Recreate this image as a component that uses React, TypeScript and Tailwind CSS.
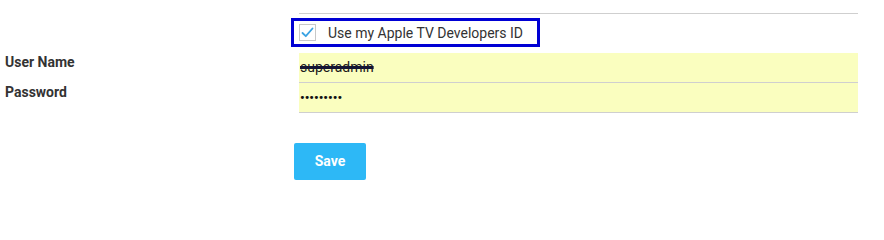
import React from 'react';

export default function App() {
  return (
    <div className="w-[884px] h-[209px] bg-white font-['Roboto','Liberation_Sans',sans-serif] text-[14px] text-[#333] overflow-hidden">
      {/* divider above the checkbox */}
      <div className="pt-[13px] pl-[299px]">
        <div className="w-[559px] border-t border-[#cfcfcf]" />
      </div>

      {/* Apple TV developer ID option (highlighted) */}
      <div className="pl-[291px] pt-[4px]">
        <label className="flex items-center w-[249px] h-[29px] border-[3px] border-[#0000d4] pl-[5px]">
          <span className="flex items-center justify-center w-[17px] h-[17px] border border-[#c8c8c8] bg-white">
            <svg width="13" height="11" viewBox="0 0 13 11" fill="none">
              <path d="M1.5 6 L4.8 9.2 L11.5 1.5" stroke="#3aa3e3" strokeWidth="1.8" strokeLinecap="round" strokeLinejoin="round" />
            </svg>
          </span>
          <span className="ml-[12px] leading-none">Use my Apple TV Developers ID</span>
        </label>
      </div>

      {/* credentials */}
      <div className="mt-[6px] flex flex-col">
        <div className="flex items-start h-[30px]">
          <div className="w-[299px] pl-[5px] font-bold leading-[18px]">User Name</div>
          <div className="w-[559px] h-[30px] bg-[#fafebf] border-b border-[#cfcfcf] flex items-center">
            <span className="pl-[1px] text-[14px] text-[#1a1a1a] line-through decoration-[#141434] decoration-[2.5px]">superadmin</span>
          </div>
        </div>
        <div className="flex items-start h-[30px]">
          <div className="w-[299px] pl-[5px] font-bold leading-[18px]">Password</div>
          <div className="w-[559px] h-[30px] bg-[#fafebf] border-b border-[#cfcfcf] flex items-center">
            <span className="pl-[1px] text-[13px] font-bold text-[#111]">•••••••••</span>
          </div>
        </div>
      </div>

      <div className="pl-[294px] pt-[30px]">
        <button className="w-[72px] h-[37px] rounded-[2px] bg-[#2db8f6] text-white font-bold text-[14px]">
          Save
        </button>
      </div>
    </div>
  );
}
